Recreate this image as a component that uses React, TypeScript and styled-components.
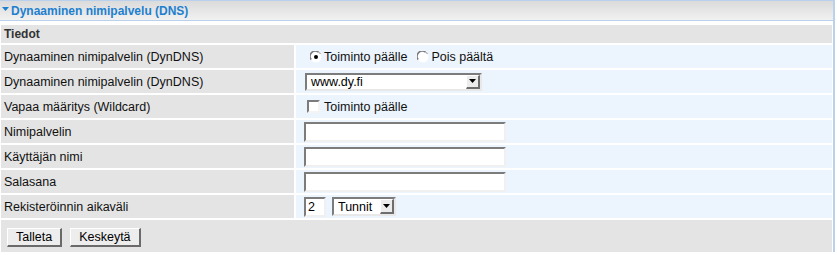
import React from 'react';
import styled, { createGlobalStyle } from 'styled-components';

const GlobalStyle = createGlobalStyle`
  html, body {
    margin: 0;
    padding: 0;
    background: #ffffff;
  }

  body {
    font-family: "Liberation Sans", Arial, sans-serif;
    font-size: 12.5px;
    color: #000000;
  }
`;

const Panel = styled.div`
  width: 833px;
  border-top: 1px solid #b9d1ec;
  border-right: 2px solid #b9d1ec;
`;

const PanelHeader = styled.div`
  height: 19px;
  display: flex;
  align-items: center;
  padding-left: 2px;
  background: linear-gradient(to bottom, #dbdbdb, #f1f1f1);
  border-bottom: 1px solid #b9d1ec;
  color: #1d80cf;
  font-weight: bold;
  font-size: 12px;
`;

const HeaderArrow = styled.span`
  display: flex;
  margin-right: 2px;
  margin-top: -3px;
`;

const FormBody = styled.div`
  display: flex;
  flex-direction: column;
  gap: 2px;
  padding: 4px 1px 0 1px;
`;

const SectionTitle = styled.div`
  height: 18px;
  display: flex;
  align-items: center;
  padding-left: 3px;
  background: #e4e4e4;
  color: #333333;
  font-weight: bold;
  font-size: 12px;
`;

const Row = styled.div`
  display: grid;
  grid-template-columns: 293px 1fr;
  gap: 2px;
  height: 23px;
`;

const LabelCell = styled.div`
  display: flex;
  align-items: center;
  padding-left: 3px;
  background: #e4e4e4;
  color: #111111;
`;

const ValueCell = styled.div`
  display: flex;
  align-items: center;
  padding-left: 8px;
  background: #ecf4fd;
`;

const OptionLabel = styled.label<{ $gap?: number }>`
  display: flex;
  align-items: center;
  gap: ${(p) => p.$gap ?? 2}px;
  margin-right: 4px;
  color: #111111;
`;

const CheckBox = styled.span`
  width: 9px;
  height: 9px;
  margin-left: 3px;
  background: #ffffff;
  border-top: 2px solid #7c7c7c;
  border-left: 2px solid #7c7c7c;
  border-bottom: 2px solid #f4f4f4;
  border-right: 2px solid #f4f4f4;
  margin-right: 4px;
`;

const TextInput = styled.input<{ $width: number }>`
  box-sizing: border-box;
  width: ${(p) => p.$width}px;
  height: 20px;
  margin: 0;
  padding: 0 2px;
  font: inherit;
  color: #000000;
  background: #ffffff;
  border-top: 2px solid #7c7c7c;
  border-left: 2px solid #7c7c7c;
  border-bottom: 2px solid #f0f0f0;
  border-right: 2px solid #f0f0f0;
  outline: none;
`;

const SelectBox = styled.div<{ $width: number; $height: number }>`
  position: relative;
  box-sizing: border-box;
  width: ${(p) => p.$width}px;
  height: ${(p) => p.$height}px;
  display: flex;
  align-items: center;
  padding-left: 4px;
  background: #ffffff;
  border-top: 2px solid #7c7c7c;
  border-left: 2px solid #7c7c7c;
  border-bottom: 2px solid #e8e8e8;
  border-right: 2px solid #e8e8e8;
  color: #000000;
`;

const SelectArrow = styled.span`
  position: absolute;
  top: 0;
  right: 0;
  bottom: 0;
  width: 11px;
  display: flex;
  align-items: center;
  justify-content: center;
  background: #ececec;
  border-top: 1px solid #ffffff;
  border-left: 1px solid #ffffff;
  border-bottom: 2px solid #6e6e6e;
  border-right: 2px solid #6e6e6e;
`;

const InlineGroup = styled.div`
  display: flex;
  align-items: center;
  gap: 6px;
`;

const ButtonRow = styled.div`
  height: 32px;
  display: flex;
  align-items: flex-start;
  gap: 8px;
  padding: 8px 0 0 6px;
  box-sizing: border-box;
  background: #e4e4e4;
`;

const Button = styled.button`
  height: 19px;
  margin: 0;
  padding: 0 8px;
  font: inherit;
  color: #000000;
  background: #ededed;
  border-top: 1px solid #ffffff;
  border-left: 1px solid #ffffff;
  border-bottom: 2px solid #6a6a6a;
  border-right: 2px solid #6a6a6a;
  line-height: 16px;
`;

function Radio({ checked }: { checked?: boolean }) {
  return (
    <svg width="12" height="12" viewBox="0 0 12 12" style={{ marginLeft: 6 }}>
      <circle cx="6" cy="6" r="5.5" fill="#ffffff" />
      <path d="M1.2 8.5 A5.2 5.2 0 0 1 8.5 1.2" fill="none" stroke="#7c7c7c" strokeWidth="1.6" />
      <path d="M8.5 1.2 A5.2 5.2 0 0 1 10.6 3" fill="none" stroke="#b0b0b0" strokeWidth="1.2" />
      {checked && <circle cx="6" cy="6" r="2" fill="#000000" />}
    </svg>
  );
}

function Select({ value, width, height }: { value: string; width: number; height: number }) {
  return (
    <SelectBox $width={width} $height={height}>
      {value}
      <SelectArrow>
        <svg width="7" height="4" viewBox="0 0 7 4">
          <path d="M0 0 H7 L3.5 4 Z" fill="#000000" />
        </svg>
      </SelectArrow>
    </SelectBox>
  );
}

export default function App() {
  return (
    <>
      <GlobalStyle />
      <Panel>
        <PanelHeader>
          <HeaderArrow>
            <svg width="7" height="4" viewBox="0 0 7 4">
              <path d="M0 0 H7 L3.5 4 Z" fill="#1d80cf" />
            </svg>
          </HeaderArrow>
          Dynaaminen nimipalvelu (DNS)
        </PanelHeader>
        <FormBody>
          <SectionTitle>Tiedot</SectionTitle>
          <Row>
            <LabelCell>Dynaaminen nimipalvelin (DynDNS)</LabelCell>
            <ValueCell>
              <OptionLabel>
                <Radio checked />
                Toiminto päälle
              </OptionLabel>
              <OptionLabel>
                <Radio />
                Pois päältä
              </OptionLabel>
            </ValueCell>
          </Row>
          <Row>
            <LabelCell>Dynaaminen nimipalvelin (DynDNS)</LabelCell>
            <ValueCell style={{ paddingLeft: 9 }}>
              <Select value="www.dy.fi" width={177} height={18} />
            </ValueCell>
          </Row>
          <Row>
            <LabelCell>Vapaa määritys (Wildcard)</LabelCell>
            <ValueCell>
              <OptionLabel $gap={0}>
                <CheckBox />
                Toiminto päälle
              </OptionLabel>
            </ValueCell>
          </Row>
          <Row>
            <LabelCell>Nimipalvelin</LabelCell>
            <ValueCell>
              <TextInput $width={202} />
            </ValueCell>
          </Row>
          <Row>
            <LabelCell>Käyttäjän nimi</LabelCell>
            <ValueCell>
              <TextInput $width={202} />
            </ValueCell>
          </Row>
          <Row>
            <LabelCell>Salasana</LabelCell>
            <ValueCell>
              <TextInput $width={202} type="password" />
            </ValueCell>
          </Row>
          <Row>
            <LabelCell>Rekisteröinnin aikaväli</LabelCell>
            <ValueCell>
              <InlineGroup>
                <TextInput $width={22} defaultValue="2" />
                <Select value="Tunnit" width={64} height={19} />
              </InlineGroup>
            </ValueCell>
          </Row>
          <ButtonRow>
            <Button>Talleta</Button>
            <Button>Keskeytä</Button>
          </ButtonRow>
        </FormBody>
      </Panel>
    </>
  );
}
